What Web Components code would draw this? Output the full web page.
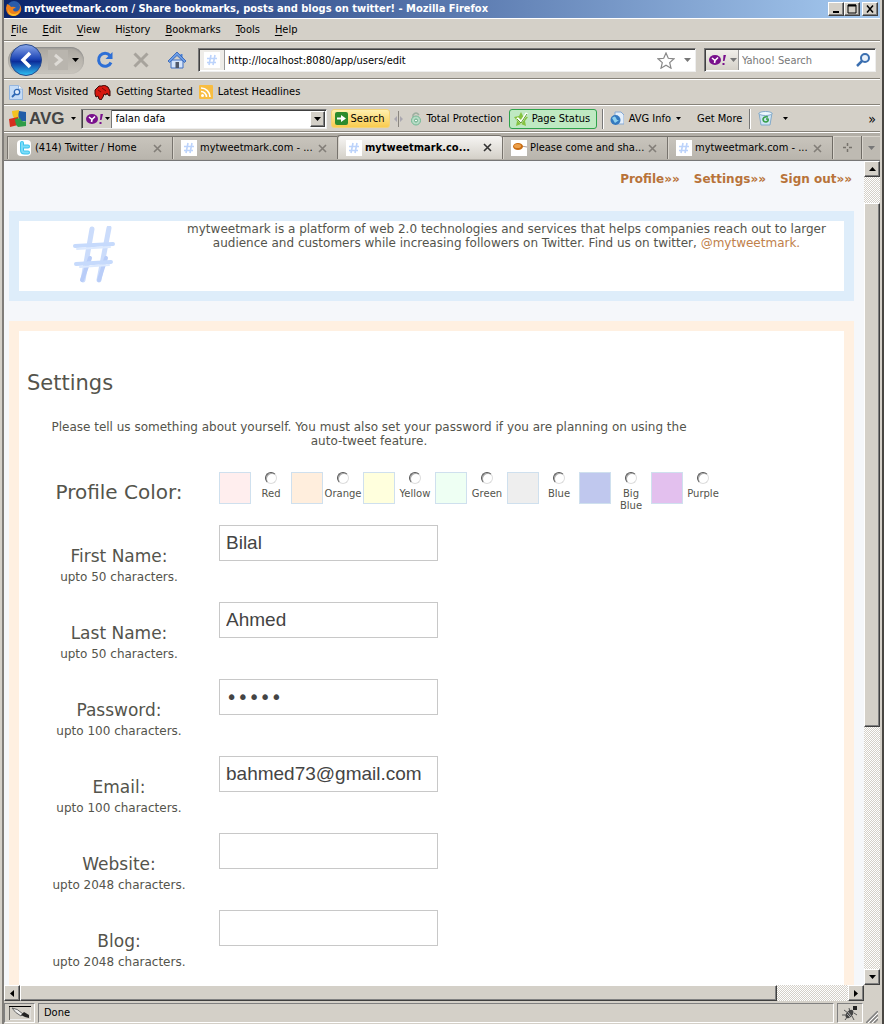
<!DOCTYPE html>
<html lang="en">
<head>
<meta charset="utf-8">
<title>mytweetmark.com / Share bookmarks, posts and blogs on twitter!</title>
<style>
body{margin:0;background:#d4d0c8;font:11px/14px "DejaVu Sans Condensed","DejaVu Sans",sans-serif;color:#000}
</style>
</head>
<body>
<browser-window>
  <title-bar slot="chrome">mytweetmark.com / Share bookmarks, posts and blogs on twitter! - Mozilla Firefox</title-bar>
  <menu-bar slot="chrome"></menu-bar>
  <nav-bar slot="chrome"></nav-bar>
  <bookmarks-bar slot="chrome"></bookmarks-bar>
  <avg-bar slot="chrome"></avg-bar>
  <tab-strip slot="chrome">
    <tab-item icon="twitter">(414) Twitter / Home</tab-item>
    <tab-item icon="hash">mytweetmark.com - ...</tab-item>
    <tab-item icon="hash" active>mytweetmark.co...</tab-item>
    <tab-item icon="plate">Please come and sha...</tab-item>
    <tab-item icon="hash">mytweetmark.com - ...</tab-item>
  </tab-strip>
  <scroll-view>
    <account-links></account-links>
    <intro-panel></intro-panel>
    <settings-panel>
      <color-picker></color-picker>
      <field-row label="First Name:" hint="upto 50 characters." value="Bilal"></field-row>
      <field-row label="Last Name:" hint="upto 50 characters." value="Ahmed"></field-row>
      <field-row label="Password:" hint="upto 100 characters." type="password" value="abcde"></field-row>
      <field-row label="Email:" hint="upto 100 characters." type="email" value="bahmed73@gmail.com"></field-row>
      <field-row label="Website:" hint="upto 2048 characters." type="url" value=""></field-row>
      <field-row label="Blog:" hint="upto 2048 characters." type="url" value=""></field-row>
    </settings-panel>
  </scroll-view>
  <status-bar slot="status">Done</status-bar>
</browser-window>

<script>
const svg = (w, h, body, vb) => `<svg width="${w}" height="${h}" viewBox="${vb || `0 0 ${w} ${h}`}" aria-hidden="true">${body}</svg>`;
const hashMark = '<g fill="none" stroke-linecap="round"><g stroke="#cbdcfb" stroke-width="5"><path d="M20 3L11 54M37 2L27 54"/></g><g stroke="#b9cdf8" stroke-width="4"><path d="M18 32L10 54M34 32L27 54"/></g><g stroke="#c6dafc" stroke-width="4"><path d="M3 20L41 18M4 38L39 36"/></g><path d="M5 23L38 21M8 41L37 39" stroke="#dce9fe" stroke-width="2"/></g>';
const icons = {
  down: svg(7, 4, '<path d="M0 0h7L3.500 4z" fill="#000"/>'),
  downGray: svg(7, 4, '<path d="M0 0h7L3.500 4z" fill="#777"/>'),
  small: svg(5, 3, '<path d="M0 0h5L2.500 3z" fill="#000"/>'),
  up: svg(7, 4, '<path d="M0 4h7L3.500 0z" fill="#000"/>'),
  left: svg(4, 7, '<path d="M4 0v7L0 3.500z" fill="#000"/>'),
  right: svg(4, 7, '<path d="M0 0v7L4 3.500z" fill="#000"/>'),
  hash: svg(16, 16, '<rect width="16" height="16" fill="#fff"/><path d="M7 3L5 13M11 3L9 13M3 6.500h10M3 10.500h9" stroke="#bcd3fb" stroke-width="1.600" fill="none"/>'),
  twitter: svg(16, 16, '<rect x="1" width="14" height="16" rx="4" fill="#fff"/><path d="M6 3V10Q6 12.500 8.500 12.500H12M6 6.500H12" stroke="#3cc4ee" stroke-width="4" stroke-linecap="round" fill="none"/><path d="M6 3V10Q6 12.500 8.500 12.500H12M6 6.500H12" stroke="#7ddcf8" stroke-width="2" stroke-linecap="round" fill="none"/>'),
  plate: svg(16, 16, '<rect width="16" height="16" fill="#fff"/><path d="M10 6l6 1" stroke="#a99" stroke-width="1"/><ellipse cx="7" cy="6.500" rx="5" ry="3.500" fill="#c96c12"/><ellipse cx="6.500" cy="6" rx="3.500" ry="2" fill="#eda04a"/>'),
  yahoo: svg(17, 12, '<ellipse cx="6" cy="6" rx="6" ry="5" fill="#79108c"/><path d="M3 4l3 2.500L9 3.500M6 6.500L5.500 9" stroke="#fff" stroke-width="1.600" fill="none"/><path d="M14.500 1h2.500l-1.500 6h-1.500zM13.500 9h2v2h-2z" fill="#79108c"/>'),
  star: svg(18, 17, '<path d="M9 1l2.300 5.300 5.700.5-4.300 3.800 1.300 5.600L9 13.300 4 16.200l1.300-5.600L1 6.800l5.700-.5z" fill="#fff" stroke="#888" stroke-width="1.200"/>'),
  lens: svg(14, 14, '<circle cx="9" cy="5" r="4" fill="#e9f1fa" stroke="#3b6fb0" stroke-width="2"/><path d="M6 8L1 13" stroke="#3b6fb0" stroke-width="2.500"/>'),
  reload: svg(18, 18, '<path d="M14 4.500A6.500 6.500 0 1 0 15 11.500" fill="none" stroke="#2d6fd6" stroke-width="3"/><path d="M16.500 1V8H9.500z" fill="#2d6fd6"/>'),
  stop: svg(16, 16, '<path d="M1.500 1.500L14.500 14.500M14.500 1.500L1.500 14.500" stroke="#a7a39c" stroke-width="3"/>'),
  home: svg(18, 18, '<path d="M3 9h12v8H3z" fill="#d5e4fa" stroke="#3f6fc2"/><path d="M12.500 3h2v4h-2z" fill="#4b80d4"/><path d="M0 10L9 1l9 9-1.500 1.500L9 4.500 1.500 11.500z" fill="#6a9ce6" stroke="#2c5db4" stroke-width=".8"/><path d="M7.500 11h3.500v6H7.500z" fill="#4f586a"/>'),
  most: svg(14, 15, '<path d="M.5.5h9L13.500 4v10.500H.5z" fill="#c5dcf7" stroke="#94b5de"/><path d="M9.500.5V4h4" fill="#fff" stroke="#94b5de"/><circle cx="8" cy="7" r="2.700" fill="#e4effc" stroke="#2f68b4" stroke-width="1.300"/><path d="M6 9L3 12" stroke="#2f68b4" stroke-width="1.800"/>'),
  dino: svg(17, 15, '<path d="M1 5l2-2 2-2 3 0 2-1 4 2 2 4v5l-2-1-1-2-1 2-2-1-1 3-2 3-2-1-1-3-2 1-1-3z" fill="#d6170f" stroke="#3a0806" stroke-width="1"/><path d="M4 5l3 2M8 3l4 3" stroke="#7a0805"/>'),
  feed: svg(14, 14, '<rect width="14" height="14" rx="1" fill="#f8bd41"/><circle cx="3.500" cy="10.500" r="1.500" fill="#fff"/><path d="M2 6.500A5.500 5.500 0 0 1 7.500 12M2 3A9 9 0 0 1 11 12" stroke="#fff" stroke-width="1.600" fill="none"/>'),
  avg: svg(18, 17, '<path d="M3 1l7-1v8L6 9Q3 6 3 1z" fill="#f3c222"/><path d="M10 1l7 1v9h-5Q8 8 10 1z" fill="#215ca8"/><path d="M0 9l9-2v8L1 17z" fill="#d5301f"/><path d="M6 9l5-1q2 5 6 3v5l-8 1q-3-3-3-8z" fill="#2f9c48"/>'),
  go: svg(13, 13, '<rect width="13" height="13" rx="2" fill="#2c8b2d"/><path d="M2 5.500h4V3l5 3.500L6 10V7.500H2z" fill="#fff"/>'),
  grip: svg(9, 16, '<path d="M4.500 0v16" stroke="#8a867f"/><path d="M0 8l3-3v6zM9 8L6 5v6z" fill="#aaa7b0"/>'),
  lock: svg(12, 15, '<path d="M3 7V4q3-4 6 0" fill="none" stroke="#9cae9f" stroke-width="1.500"/><circle cx="6" cy="9.500" r="4.500" fill="#b7dcc6" stroke="#72b894"/><circle cx="6" cy="9.500" r="1.500" fill="#f4fff7" stroke="#61a782"/>'),
  check: svg(15, 15, '<path d="M7 1l2 4 5 1-3 4 1 5-5-2-5 2 1-5-3-4 5-1z" fill="#85c341"/><path d="M3 7l4 4 6-9" stroke="#fff" stroke-width="2.500" fill="none"/><path d="M3 8l4 4 6-9" stroke="#599b2b" stroke-width="1" fill="none"/>'),
  globe: svg(14, 15, '<path d="M5 1h6l3 3v9H5z" fill="#e5effa" stroke="#86a9d4"/><circle cx="5.500" cy="9" r="5" fill="#3479bf"/><path d="M2 7q3-3 4 0t3 2-4 3z" fill="#8ed0ee"/>'),
  bin: svg(15, 15, '<path d="M1 2h13l-2 12H3z" fill="#cfe6f7" stroke="#83aac9"/><ellipse cx="7.500" cy="2.500" rx="6.500" ry="2" fill="#eef7fd" stroke="#83aac9"/><path d="M10 6q-4-1-5 2 0 3 3 3 3-1 2-3H8" fill="none" stroke="#38a049" stroke-width="1.600"/>')
};

function define(name, css, html) {
  customElements.define(name, class extends HTMLElement {
    constructor() {
      super();
      this.attachShadow({ mode: 'open' });
    }
    connectedCallback() {
      const t = document.createElement('template');
      t.innerHTML = `<style>:host,*{box-sizing:border-box}svg{display:block;flex:none}button,input{font:inherit;color:inherit;margin:0}${css}</style>` +
        (typeof html === 'function' ? html(this) : html);
      this.shadowRoot.replaceChildren(t.content.cloneNode(true));
    }
  });
}

const groove = 'border-top:1px solid #fff;border-bottom:1px solid #868279;';
const bevel = 'border:1px solid;border-color:#fff #404040 #404040 #fff;box-shadow:inset -1px -1px #808080;background:#d4d0c8;border-radius:0;padding:0;';

define('browser-window', `
  :host{display:flex;flex-direction:column;height:100vh;border-left:4px ridge #d4d0c8;border-right:2px solid #484642;padding-right:2px;background:#d4d0c8;overflow:hidden}
  main{flex:1;min-height:0;display:flex}
  `, '<slot name="chrome"></slot><main><slot></slot></main><slot name="status"></slot>');

define('title-bar', `
  :host{display:flex;align-items:center;height:18px;flex:none;background:linear-gradient(90deg,#0a246a,#a6caf0);color:#fff;font-weight:bold;padding:0 2px;gap:2px}
  span{flex:1;white-space:nowrap;overflow:hidden}
  div{display:flex}
  button{${bevel}width:16px;height:14px;display:grid;place-items:center;color:#000}
  .x{margin-left:2px}`,
  svg(16, 16, '<circle cx="8" cy="7" r="7" fill="#2a5caa"/><path d="M1 3q3 1 4 3 3-1 5 1-3 0-3 2 2 3 6 0 2-3 0-6 3 3 2 7-2 5-8 5Q0 14 0 7z" fill="#ef7f1a"/><path d="M2 8q1 5 6 5 4 0 6-4-2 6-7 6-5-1-5-7z" fill="#fbc02d"/>') +
  `<span><slot></slot></span><div><button aria-label="Minimize">${svg(10, 10, '<path d="M2 7h6v2H2z"/>')}</button><button aria-label="Maximize">${svg(10, 10, '<path d="M1 1h8v8H1z" fill="none" stroke="#000"/><path d="M1 1.500h8" stroke="#000" stroke-width="2"/>')}</button><button class="x" aria-label="Close">${svg(10, 10, '<path d="M2 1.500l6 7M8 1.500l-6 7" stroke="#000" stroke-width="1.500"/>')}</button></div>`);

define('menu-bar', `
  :host{display:flex;align-items:center;height:23px;flex:none;${groove}}
  ul{display:flex;gap:15px;list-style:none;margin:0;padding:0 7px}
  u{text-underline-offset:2px}`,
  '<ul><li><u>F</u>ile</li><li><u>E</u>dit</li><li><u>V</u>iew</li><li>Hi<u>s</u>tory</li><li><u>B</u>ookmarks</li><li><u>T</u>ools</li><li><u>H</u>elp</li></ul>');

define('nav-bar', `
  :host{display:flex;align-items:center;height:38px;flex:none;${groove}padding:0 4px}
  button{border:0;background:none;padding:0;display:grid;place-items:center}
  .pill{display:flex;align-items:center;width:76px;height:27px;border-radius:14px;background:linear-gradient(#aaa69f,#c9c5bd);box-shadow:inset 0 1px 2px #888;margin-right:12px;justify-content:space-between;padding-right:5px}
  .tools{display:flex;gap:18px;margin-right:12px}
  .tools button{width:18px}
  .box{display:flex;align-items:center;height:24px;background:#fff;border:1px solid;border-color:#777 #eee #eee #777;box-shadow:inset 1px 1px #404040}
  .url{flex:1;min-width:0}
  .site{width:25px;height:20px;display:grid;place-items:center;background:#eeece8;border-right:1px solid #999;margin-left:1px}
  input{border:0;outline:0;background:none;padding:0 3px;flex:1;min-width:0;height:20px}
  input::placeholder{color:#777;opacity:1}
  .url button{margin-right:9px}.url button:last-child{margin-right:4px}
  .find{width:172px;margin-left:8px}
  .engine{display:flex;align-items:center;gap:4px;width:33px;height:20px;padding-left:3px;background:linear-gradient(#f1efea,#d4d0c8);border-right:1px solid #999;margin-left:1px}
  .find button:last-child{margin-right:5px}`,
  `<div class="pill"><button aria-label="Back">${svg(36, 34, '<defs><linearGradient id="b" x2="0" y2="1"><stop stop-color="#8ba8ea"/><stop offset=".45" stop-color="#2149b8"/><stop offset=".55" stop-color="#0b2d9a"/><stop offset="1" stop-color="#2fc3f4"/></linearGradient></defs><circle cx="18" cy="17" r="15.500" fill="url(#b)" stroke="#284a8c"/><path d="M22 10l-7 7 7 7" fill="none" stroke="#fff" stroke-width="3.500"/>')}</button><button aria-label="Forward">${svg(20, 20, '<rect width="20" height="20" fill="#b9b5ae"/><path d="M7 5l6 5-6 5" fill="none" stroke="#dedbd6" stroke-width="3"/>')}</button><button aria-label="History">${icons.down}</button></div>
  <div class="tools"><button aria-label="Reload">${icons.reload}</button><button aria-label="Stop">${icons.stop}</button><button aria-label="Home">${icons.home}</button></div>
  <div class="box url"><span class="site">${icons.hash}</span><input aria-label="Address" value="http://localhost:8080/app/users/edit"><button aria-label="Bookmark this page">${icons.star}</button><button aria-label="Show history">${icons.downGray}</button></div>
  <div class="box find"><button class="engine" aria-label="Search engine">${icons.yahoo}${icons.downGray}</button><input aria-label="Search" placeholder="Yahoo! Search"><button aria-label="Go">${icons.lens}</button></div>`);

define('bookmarks-bar', `
  :host{display:flex;align-items:center;height:26px;flex:none;${groove}padding:0 5px;gap:6px}
  a{display:flex;align-items:center;gap:5px;color:inherit;text-decoration:none}`,
  `<a href="#most">${icons.most}Most Visited</a><a href="#start">${icons.dino}Getting Started</a><a href="#news">${icons.feed}Latest Headlines</a>`);

define('avg-bar', `
  :host{display:flex;align-items:center;height:27px;flex:none;${groove}padding:0 4px 0 5px;white-space:nowrap}
  button{border:0;background:none;padding:0;display:flex;align-items:center;gap:5px}
  .logo{font:bold 17px/20px "Liberation Sans",sans-serif;color:#444;gap:2px}
  .more{margin-left:6px}
  .combo{display:flex;align-items:center;width:246px;height:20px;background:#fff;border:1px solid;border-color:#777 #eee #eee #777;box-shadow:inset 1px 1px #404040;margin:0 4px 0 5px}
  .engine{width:29px;height:18px;padding-left:3px;gap:2px;background:#d4d0c8;border-right:1px solid #777;margin-left:1px}
  input{border:0;outline:0;background:none;padding:0 4px;flex:1;min-width:0;height:17px}
  .drop{${bevel}width:15px;height:16px;justify-content:center;margin-right:1px}
  .go{width:59px;height:19px;padding-left:3px;gap:3px;background:linear-gradient(#fff0ae,#f9cb4f);border:1px solid #f3d377;border-radius:3px}
  .grip{margin:0 7px 0 4px}
  .page{height:20px;width:88px;border:1px solid #2ea24b;border-radius:3px;background:#bfe9c2;padding-left:4px;gap:3px;margin:0 5px 0 6px}
  .sep{width:2px;height:20px;border-left:1px solid #777;border-right:1px solid #fff}
  .info{margin-left:6px}.get{margin:0 7px 0 16px}.bin{margin-left:7px;gap:10px}
  .rest{margin-left:auto;font-size:14px}`,
  `<button class="logo">${icons.avg}AVG</button><button class="more" aria-label="AVG menu">${icons.small}</button>
  <div class="combo"><button class="engine" aria-label="Search engine">${icons.yahoo}${icons.small}</button><input aria-label="AVG search" value="falan dafa"><button class="drop" aria-label="Recent searches">${icons.down}</button></div>
  <button class="go">${icons.go}Search</button><span class="grip">${icons.grip}</span>
  <button>${icons.lock}Total Protection</button><button class="page">${icons.check}Page Status</button><span class="sep"></span>
  <button class="info">${icons.globe}AVG Info${icons.small}</button><button class="get">Get More</button><span class="sep"></span>
  <button class="bin" aria-label="Cleaner">${icons.bin}${icons.small}</button><button class="rest" aria-label="More items">»</button>`);

define('tab-strip', `
  :host{display:flex;height:29px;flex:none;background:#b2aea6;border-top:1px solid #fff;border-bottom:1px solid #777;padding:2px 0 1px 3px}
  ::slotted(*){flex:1;min-width:0}
  button{border:0;border-left:1px solid #6f6b65;background:#bebab2;display:grid;place-items:center;padding:0;margin-top:1px;box-shadow:inset 1px 1px #d8d4cc}
  .new{width:29px}.all{width:19px}`,
  `<slot></slot><button class="new" aria-label="New tab">${svg(9, 9, '<path d="M4.500 0v3M4.500 6v3M0 4.500h3M6 4.500h3" stroke="#77736d" stroke-width="1.500"/>')}</button><button class="all" aria-label="List tabs">${icons.downGray}</button>`);

define('tab-item', `
  :host{display:flex;align-items:center;gap:3px;padding:0 10px 0 8px;margin-top:1px;background:linear-gradient(#c8c4bc,#b9b5ad);border:1px solid #77736d;border-right:0;border-bottom:0;white-space:nowrap;overflow:hidden;box-shadow:inset 1px 0 #d8d4cc}
  :host([active]){background:linear-gradient(#f6f5f3,#d4d0c8);font-weight:bold;margin-top:0;border-radius:3px 3px 0 0}
  span{flex:1;overflow:hidden}
  button{border:0;background:none;padding:0}`,
  el => `${icons[el.getAttribute('icon')]}<span><slot></slot></span><button aria-label="Close tab">${svg(9, 9, `<path d="M1 1l7 7M8 1L1 8" stroke="${el.hasAttribute('active') ? '#333' : '#827e78'}" stroke-width="1.600"/>`)}</button>`);

define('scroll-view', `
  :host{display:grid;grid-template:minmax(0,1fr) 16px / minmax(0,1fr) 16px;flex:1;min-width:0}
  .page{overflow:hidden;background:#f5f7fa;display:flex;flex-direction:column;padding:0 10px 0 5px;font:12px/14px "DejaVu Sans",Verdana,sans-serif;color:#54544c}
  .v,.h{display:grid;background:repeating-conic-gradient(#fff 0 25%,#d4d0c8 0 50%) 0 0/2px 2px}
  .v{grid-template-rows:16px 26fr 524fr 242fr 16px}
  .h{grid-template-columns:16px 757fr 71fr 16px}
  button,.thumb{${bevel}display:grid;place-items:center}
  .v .thumb{grid-row:3}.v button:last-child{grid-row:5}
  .h .thumb{grid-column:2}.h button:last-child{grid-column:4}`,
  `<div class="page"><slot></slot></div>
  <div class="v"><button aria-label="Scroll up">${icons.up}</button><div class="thumb"></div><button aria-label="Scroll down">${icons.down}</button></div>
  <div class="h"><button aria-label="Scroll left">${icons.left}</button><div class="thumb"></div><button aria-label="Scroll right">${icons.right}</button></div>`);

define('account-links', `
  :host{display:flex;justify-content:flex-end;flex:none;height:50px;padding:11px 2px 0 0;gap:14px;font-weight:bold}
  a{color:#b87339;text-decoration:none}`,
  '<a href="#profile">Profile»»</a><a href="#settings">Settings»»</a><a href="#signout">Sign out»»</a>');

define('intro-panel', `
  :host{display:flex;flex:none;height:90px;border:10px solid #deedfa;background:#fff;margin-bottom:20px}
  .logo{width:150px;display:flex;justify-content:center;padding-top:5px}
  p{flex:1;margin:0;padding-top:1px;text-align:center}
  a{color:#c0804a;text-decoration:none}`,
  `<div class="logo">${svg(44, 58, hashMark)}</div><p>mytweetmark is a platform of web 2.0 technologies and services that helps companies reach out to larger audience and customers while increasing followers on Twitter. Find us on twitter, <a href="#twitter">@mytweetmark.</a></p>`);

define('settings-panel', `
  :host{display:block;flex:none;border:10px solid #fff0e1;background:#fff;padding:40px 8px 0}
  h1{font-size:21px;line-height:24px;font-weight:normal;margin:0 0 25px}
  p{margin:0 0 24px;padding:0 6px;text-align:center;text-wrap:wrap}
  .keep{white-space:nowrap}
  form{display:block;max-width:700px}
  .intro{max-width:684px}`,
  '<div class="intro"><h1>Settings</h1><p>Please tell us something about yourself. You must also set your password if you are planning on using the <span class="keep">auto-tweet feature.</span></p></div><form><slot></slot></form>');

const swatches = [['Red', '#ffeeee'], ['Orange', '#ffeedd'], ['Yellow', '#ffffdd'], ['Green', '#eefff3'], ['Blue', '#eeeeee'], ['Big Blue', '#c0c8ee'], ['Purple', '#e3c0ee']];
define('color-picker', `
  :host{display:block;height:53px}
  fieldset{border:0;margin:0;padding:0;min-width:0;display:grid;grid-template-columns:184px 1fr;column-gap:8px}
  .name{font-size:20px;line-height:40px;text-align:center}
  .list{display:flex}
  label{display:flex;flex:none;width:72px;font-size:10px;line-height:12px;text-align:center}
  i{width:32px;height:32px;border:1px solid #cfe0ee;flex:none}
  .pick{width:40px;display:flex;flex-direction:column;align-items:center}
  input{appearance:none;width:12px;height:12px;border-radius:50%;border:1px solid;border-color:#555 #ddd #ddd #555;box-shadow:inset 1px 1px #aaa;margin-bottom:4px;background:#fff}`,
  `<fieldset aria-labelledby="name"><div class="name" id="name">Profile Color:</div><div class="list">${swatches.map(([n, c]) => `<label><i style="background:${c}"></i><span class="pick"><input type="radio" name="color" value="${n}">${n}</span></label>`).join('')}</div></fieldset>`);

define('field-row', `
  :host{display:grid;grid-template-columns:184px 219px;column-gap:8px;height:77px}
  label{text-align:center;padding-top:20px;font-size:17px;line-height:22px}
  small{display:block;font-size:12px;line-height:20px}
  input{width:100%;height:36px;border:1px solid #c8c8c8;background:#fff;padding:0 6px;font:19px "Liberation Sans",Arial,sans-serif;color:#444;outline:0}
  input[type=password]{font-family:"DejaVu Sans",Verdana,sans-serif}`,
  el => `<label for="field">${el.getAttribute('label')}<small>${el.getAttribute('hint')}</small></label><input id="field" type="${el.getAttribute('type') || 'text'}" value="${el.getAttribute('value')}">`);

define('status-bar', `
  :host{display:flex;height:23px;flex:none;padding:2px 0 1px;gap:3px;align-items:stretch}
  div{border:1px solid;border-color:#808080 #fff #fff #808080;display:flex;align-items:center;justify-content:center}
  .tool{width:31px}.text{flex:1;padding-left:5px;justify-content:flex-start}.bug{width:26px}
  .grip{align-self:flex-end;width:14px}`,
  `<div class="tool">${svg(22, 14, '<path d="M0 14V.5h22" fill="none" stroke="#000"/><path d="M22 1v12.500H1" fill="none" stroke="#eee"/><path d="M3 2q5 0 11 6l-2 2Q6 7 3 2z" fill="#eee" stroke="#666"/><path d="M12 9l3-3 5 3v3l-4-1z" fill="#222"/>')}</div><div class="text" role="status"><slot></slot></div><div class="bug">${svg(18, 16, '<path d="M3 5l4 3M1 10h5M4 15l3-4M8 3l1 4M13 8l3 2M11 11l2 4" stroke="#555" fill="none"/><ellipse cx="8.500" cy="9" rx="3" ry="5" transform="rotate(40 8.500 9)" fill="#444"/><path d="M7 7l3 4M6 9l3 3" stroke="#aaa"/><path d="M12 1h4v4h-4z" fill="#222"/>')}</div><span class="grip">${svg(12, 12, '<path d="M0 12L12 0M4 12l8-8M8 12l4-4" stroke="#808080" stroke-width="1.500"/><path d="M2 12L12 2M6 12l6-6" stroke="#fff"/>')}</span>`);
</script>
</body>
</html>
